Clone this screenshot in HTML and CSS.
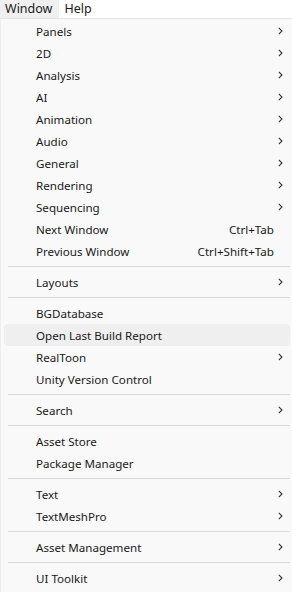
FILE: index.html
```html
<!DOCTYPE html>
<html lang="en">
<head>
    <meta charset="UTF-8">
    <meta name="viewport" content="width=device-width, initial-scale=1.0">
    <title>Window Menu</title>
    <link rel="stylesheet" href="styles.css">
</head>
<body>

    <div class="menubar">
        <span class="menubar-item active">Window</span>
        <span class="menubar-item">Help</span>
    </div>

    <div class="dropdown">
        <div class="item"><span>Panels</span><svg class="arrow" viewBox="0 0 5 8"><path d="M0.8 0.8 L4 4 L0.8 7.2"/></svg></div>
        <div class="item"><span>2D</span><svg class="arrow" viewBox="0 0 5 8"><path d="M0.8 0.8 L4 4 L0.8 7.2"/></svg></div>
        <div class="item"><span>Analysis</span><svg class="arrow" viewBox="0 0 5 8"><path d="M0.8 0.8 L4 4 L0.8 7.2"/></svg></div>
        <div class="item"><span>AI</span><svg class="arrow" viewBox="0 0 5 8"><path d="M0.8 0.8 L4 4 L0.8 7.2"/></svg></div>
        <div class="item"><span>Animation</span><svg class="arrow" viewBox="0 0 5 8"><path d="M0.8 0.8 L4 4 L0.8 7.2"/></svg></div>
        <div class="item"><span>Audio</span><svg class="arrow" viewBox="0 0 5 8"><path d="M0.8 0.8 L4 4 L0.8 7.2"/></svg></div>
        <div class="item"><span>General</span><svg class="arrow" viewBox="0 0 5 8"><path d="M0.8 0.8 L4 4 L0.8 7.2"/></svg></div>
        <div class="item"><span>Rendering</span><svg class="arrow" viewBox="0 0 5 8"><path d="M0.8 0.8 L4 4 L0.8 7.2"/></svg></div>
        <div class="item"><span>Sequencing</span><svg class="arrow" viewBox="0 0 5 8"><path d="M0.8 0.8 L4 4 L0.8 7.2"/></svg></div>
        <div class="item"><span>Next Window</span><span class="shortcut">Ctrl+Tab</span></div>
        <div class="item"><span>Previous Window</span><span class="shortcut">Ctrl+Shift+Tab</span></div>
        <div class="separator"></div>
        <div class="item"><span>Layouts</span><svg class="arrow" viewBox="0 0 5 8"><path d="M0.8 0.8 L4 4 L0.8 7.2"/></svg></div>
        <div class="separator"></div>
        <div class="item"><span>BGDatabase</span></div>
        <div class="item hover"><span>Open Last Build Report</span></div>
        <div class="item"><span>RealToon</span><svg class="arrow" viewBox="0 0 5 8"><path d="M0.8 0.8 L4 4 L0.8 7.2"/></svg></div>
        <div class="item"><span>Unity Version Control</span></div>
        <div class="separator"></div>
        <div class="item"><span>Search</span><svg class="arrow" viewBox="0 0 5 8"><path d="M0.8 0.8 L4 4 L0.8 7.2"/></svg></div>
        <div class="separator"></div>
        <div class="item"><span>Asset Store</span></div>
        <div class="item"><span>Package Manager</span></div>
        <div class="separator"></div>
        <div class="item"><span>Text</span><svg class="arrow" viewBox="0 0 5 8"><path d="M0.8 0.8 L4 4 L0.8 7.2"/></svg></div>
        <div class="item"><span>TextMeshPro</span><svg class="arrow" viewBox="0 0 5 8"><path d="M0.8 0.8 L4 4 L0.8 7.2"/></svg></div>
        <div class="separator"></div>
        <div class="item"><span>Asset Management</span><svg class="arrow" viewBox="0 0 5 8"><path d="M0.8 0.8 L4 4 L0.8 7.2"/></svg></div>
        <div class="separator"></div>
        <div class="item"><span>UI Toolkit</span><svg class="arrow" viewBox="0 0 5 8"><path d="M0.8 0.8 L4 4 L0.8 7.2"/></svg></div>
    </div>

</body>
</html>
```

FILE: styles.css
```css
body {
    margin: 0;
    font-family: "Noto Sans", "Noto Sans CJK KR", sans-serif;
    font-size: 11.6px;
    color: #1a1a1a;
    background-color: #ffffff;
}

.menubar {
    display: flex;
    height: 18px;
    background-color: #ffffff;
}

.menubar-item {
    padding: 0 7px 0 5px;
    line-height: 17px;
    font-size: 12.5px;
}

.menubar-item.active {
    background-color: #f0f0f0;
}

.dropdown {
    background-color: #f9f9f9;
    border-top: 1px solid #e3e3e3;
    border-left: 1px solid #eeeeee;
    padding-top: 1px;
    height: 574px;
}

.item {
    display: flex;
    align-items: center;
    justify-content: space-between;
    height: 22px;
    margin: 0 2px 0 3px;
    padding: 0 7px 0 32px;
    border-radius: 4px;
}

.item.hover {
    background-color: #efefef;
}

.arrow {
    width: 5px;
    height: 8px;
    fill: none;
    stroke: #333333;
    stroke-width: 1.1;
}

.shortcut {
    margin-right: 9px;
}

.separator {
    height: 1px;
    margin: 4px 2px 4px 7px;
    background-color: #d9d9d9;
}
```
